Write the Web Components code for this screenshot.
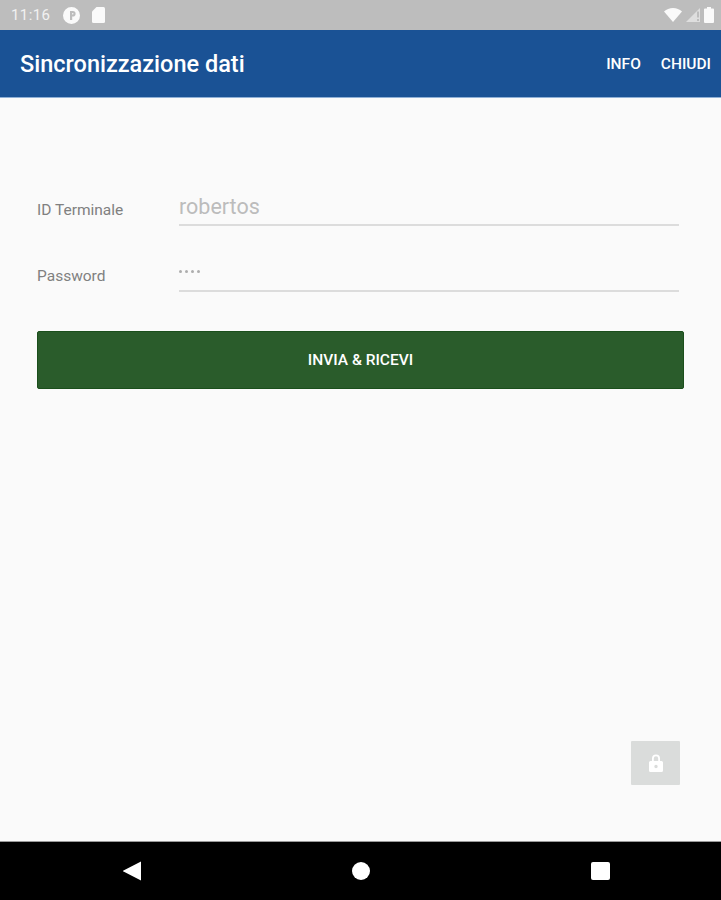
<!DOCTYPE html>
<html lang="it">
<head>
<meta charset="utf-8">
<title>Sincronizzazione dati</title>
<style>
    html, body { margin: 0; height: 100%; }
    body {
        font-family: Roboto, "Liberation Sans", sans-serif;
        background: #fafafa;
    }
    sync-app { height: 900px; }
</style>
</head>
<body>
<sync-app>
    <status-bar slot="status"></status-bar>
    <app-bar slot="bar" heading="Sincronizzazione dati">
        <span>INFO</span>
        <span>CHIUDI</span>
    </app-bar>
    <login-form></login-form>
    <lock-button slot="fab"></lock-button>
    <nav-bar slot="nav"></nav-bar>
</sync-app>

<script>
class SyncApp extends HTMLElement {
    connectedCallback() {
        this.attachShadow({ mode: 'open' });
        this.shadowRoot.innerHTML = `
            <style>
                :host {
                    display: flex;
                    flex-direction: column;
                    background: #fafafa;
                }
                main {
                    flex: 1;
                    display: flex;
                    flex-direction: column;
                    justify-content: space-between;
                }
                .fab-row {
                    display: flex;
                    justify-content: flex-end;
                    padding: 0 41px 56px 0;
                }
            </style>
            <slot name="status"></slot>
            <slot name="bar"></slot>
            <main>
                <slot></slot>
                <div class="fab-row"><slot name="fab"></slot></div>
            </main>
            <slot name="nav"></slot>
        `;
    }
}

class StatusBar extends HTMLElement {
    connectedCallback() {
        this.attachShadow({ mode: 'open' });
        this.shadowRoot.innerHTML = `
            <style>
                :host {
                    display: flex;
                    align-items: center;
                    height: 30px;
                    padding: 0 7px 0 11px;
                    background: #bdbdbd;
                    color: #f1f1f1;
                    font-size: 15px;
                    letter-spacing: 0.4px;
                }
                .time { margin-right: 13px; }
                svg { display: block; fill: #fafafa; }
                .doc { margin-left: 12px; }
                .right { margin-left: auto; display: flex; align-items: center; gap: 4px; }
            </style>
            <span class="time">11:16</span>
            <svg width="17" height="17" viewBox="0 0 17 17">
                <path fill-rule="evenodd" d="M8.5 0a8.5 8.5 0 1 1 0 17a8.5 8.5 0 0 1 0-17zM7 4v9h2.2V9.6h.6a2.8 2.8 0 0 0 0-5.6zm2.2 2h.5a.8.8 0 0 1 0 1.6h-.5z"/>
            </svg>
            <svg class="doc" width="13" height="16" viewBox="0 0 13 16">
                <path d="M4.5 0H11.5A1.5 1.5 0 0 1 13 1.500V14.500A1.500 1.500 0 0 1 11.500 16H1.500A1.500 1.500 0 0 1 0 14.500V4.500z"/>
            </svg>
            <div class="right">
                <svg width="18" height="14" viewBox="0 0 18 14">
                    <path d="M9 14L0 3.500C2.500 1.200 5.500 0 9 0s6.500 1.200 9 3.500z"/>
                </svg>
                <svg width="14" height="14" viewBox="0 0 14 14">
                    <path d="M14 0V14H0z" opacity=".55"/>
                    <path d="M11 3.500h2V9.500h-2zM11 11h2v2h-2z" fill="#bdbdbd"/>
                </svg>
                <svg width="10" height="16" viewBox="0 0 10 16">
                    <path d="M3 0h4v1.500h2a1 1 0 0 1 1 1V15a1 1 0 0 1-1 1H1a1 1 0 0 1-1-1V2.500a1 1 0 0 1 1-1h2z"/>
                </svg>
            </div>
        `;
    }
}

class AppBar extends HTMLElement {
    connectedCallback() {
        this.attachShadow({ mode: 'open' });
        this.shadowRoot.innerHTML = `
            <style>
                :host {
                    display: flex;
                    align-items: center;
                    box-sizing: border-box;
                    height: 68px;
                    padding: 0 10px 0 20px;
                    background: #1a5295;
                    border-bottom: 1px solid #8fb0d6;
                    color: #fff;
                }
                h1 {
                    margin: 0;
                    flex: 1;
                    font-size: 23.500px;
                    font-weight: 500;
                }
                .actions {
                    display: flex;
                    gap: 20px;
                    font-size: 15.500px;
                    font-weight: 500;
                }
            </style>
            <h1>${this.getAttribute('heading')}</h1>
            <div class="actions"><slot></slot></div>
        `;
    }
}

class FormRow extends HTMLElement {
    connectedCallback() {
        this.attachShadow({ mode: 'open' });
        this.shadowRoot.innerHTML = `
            <style>
                :host {
                    display: flex;
                    align-items: flex-end;
                    height: 37px;
                }
                label {
                    width: 142px;
                    padding-bottom: 7px;
                    font-size: 15.500px;
                    color: #808080;
                }
                .field {
                    flex: 1;
                    box-sizing: border-box;
                    height: 37px;
                    display: flex;
                    align-items: center;
                    border-bottom: 2px solid #dcdcdc;
                    font-size: 21.500px;
                    color: #bcbcbc;
                }
            </style>
            <label>${this.getAttribute('label')}</label>
            <div class="field"><slot></slot></div>
        `;
    }
}

class LoginForm extends HTMLElement {
    connectedCallback() {
        this.attachShadow({ mode: 'open' });
        this.shadowRoot.innerHTML = `
            <style>
                :host {
                    display: flex;
                    flex-direction: column;
                    padding: 91px 37px 0 37px;
                }
                .rows {
                    display: flex;
                    flex-direction: column;
                    gap: 29px;
                    padding-right: 5px;
                }
                .dots {
                    display: flex;
                    gap: 3px;
                    padding-bottom: 2px;
                }
                .dots i {
                    width: 3px;
                    height: 3px;
                    border-radius: 50%;
                    background: #adadad;
                }
                button {
                    margin-top: 39px;
                    height: 58px;
                    border: 1px solid #1b4f1c;
                    border-radius: 2px;
                    background: #2a5c2b;
                    color: #fff;
                    font: 500 15.500px Roboto, "Liberation Sans", sans-serif;
                }
            </style>
            <div class="rows">
                <form-row label="ID Terminale">robertos</form-row>
                <form-row label="Password"><span class="dots"><i></i><i></i><i></i><i></i></span></form-row>
            </div>
            <button type="button">INVIA &amp; RICEVI</button>
        `;
    }
}

class LockButton extends HTMLElement {
    connectedCallback() {
        this.attachShadow({ mode: 'open' });
        this.shadowRoot.innerHTML = `
            <style>
                :host {
                    display: flex;
                    align-items: center;
                    justify-content: center;
                    width: 49px;
                    height: 44px;
                    background: #dadcdb;
                    border-radius: 1px;
                }
                svg { display: block; }
            </style>
            <svg width="14" height="18" viewBox="0 0 14 18">
                <path fill="#fff" fill-rule="evenodd" d="M3 7V4.500a4 4 0 0 1 8 0V7h1.500A1.500 1.500 0 0 1 14 8.500V16.500A1.500 1.500 0 0 1 12.500 18H1.500A1.500 1.500 0 0 1 0 16.500V8.500A1.500 1.500 0 0 1 1.500 7zM4.800 7h4.400V4.500a2.200 2.200 0 0 0-4.400 0zM7 10.800a1.700 1.700 0 1 0 0 3.400a1.700 1.700 0 0 0 0-3.400z"/>
            </svg>
        `;
    }
}

class NavBar extends HTMLElement {
    connectedCallback() {
        this.attachShadow({ mode: 'open' });
        this.shadowRoot.innerHTML = `
            <style>
                :host {
                    display: grid;
                    grid-template-columns: repeat(3, 1fr);
                    box-sizing: border-box;
                    height: 59px;
                    padding: 0 .5px;
                    background: #000;
                    border-top: 1px solid #9a9a9a;
                }
                .cell { display: flex; align-items: center; justify-content: center; }
                svg { display: block; fill: #fff; }
            </style>
            <div class="cell" style="padding-left:60px; justify-content:flex-start">
                <svg width="81" height="20" viewBox="0 0 81 20"><path d="M80 0.500V19.500L62.500 10.500a.5.5 0 0 1 0-1z"/></svg>
            </div>
            <div class="cell">
                <svg width="18" height="18" viewBox="0 0 18 18"><circle cx="9" cy="9" r="9"/></svg>
            </div>
            <div class="cell">
                <svg width="19" height="18" viewBox="0 0 19 18"><rect width="19" height="18" rx="2"/></svg>
            </div>
        `;
    }
}

customElements.define('sync-app', SyncApp);
customElements.define('status-bar', StatusBar);
customElements.define('app-bar', AppBar);
customElements.define('form-row', FormRow);
customElements.define('login-form', LoginForm);
customElements.define('lock-button', LockButton);
customElements.define('nav-bar', NavBar);
</script>
</body>
</html>
